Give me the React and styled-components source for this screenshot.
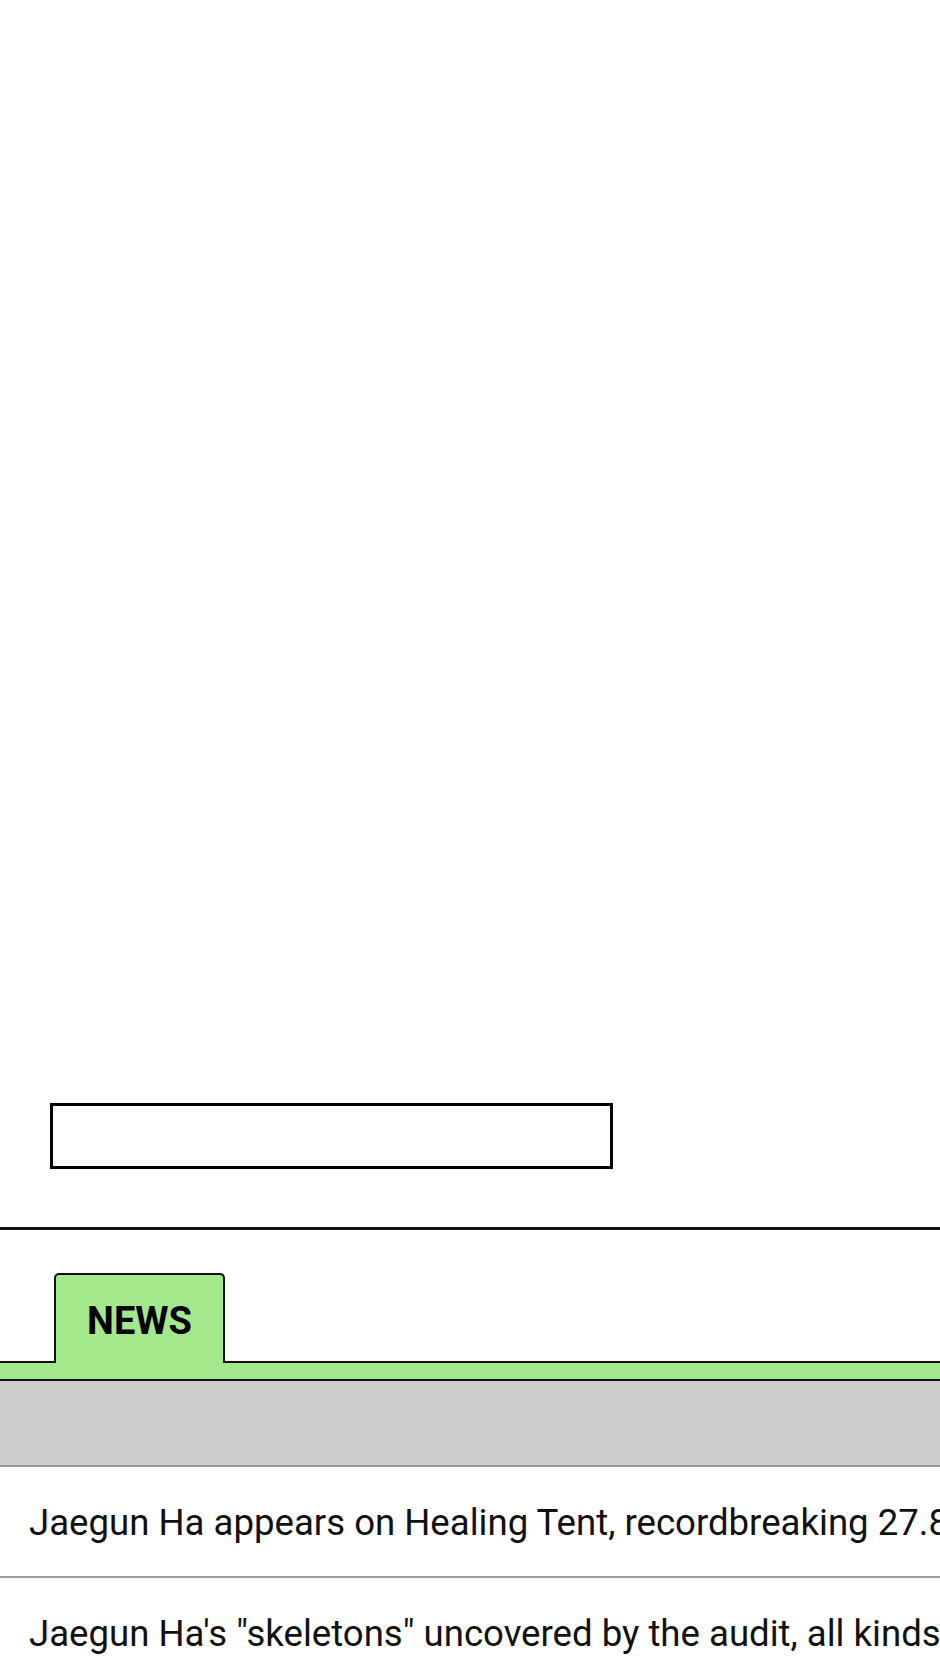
import React from "react";
import styled, { createGlobalStyle } from "styled-components";

const GlobalStyle = createGlobalStyle`
  html, body {
    margin: 0;
    padding: 0;
    background: #ffffff;
  }
  body {
    font-family: Roboto, "Liberation Sans", Arial, sans-serif;
    color: #111111;
    overflow-x: hidden;
  }
`;

const Page = styled.div`
  width: 100%;
  overflow: hidden;
`;

const Blank = styled.div`
  height: 1103px;
`;

const SearchBox = styled.input`
  display: block;
  box-sizing: border-box;
  margin: 0 0 0 50px;
  width: 563px;
  height: 66px;
  border: 3px solid #000000;
  border-radius: 0;
  background: #ffffff;
  font-family: inherit;
  font-size: 28px;
  padding: 0 12px;
  outline: none;
`;

const Rule = styled.hr`
  margin: 58px 0 0;
  border: none;
  height: 3px;
  background: #111111;
`;

const TabStrip = styled.div`
  display: flex;
  align-items: flex-end;
  margin-top: 43px;
  padding-left: 54px;
  border-bottom: 2px solid #111111;
`;

const Tab = styled.div`
  box-sizing: border-box;
  width: 171px;
  height: 90px;
  margin-bottom: -2px;
  display: flex;
  align-items: center;
  justify-content: center;
  padding-top: 4px;
  background: ${(p) => (p.active ? "#a3e98c" : "#ffffff")};
  border: 2px solid #111111;
  border-bottom: none;
  border-radius: 5px 5px 0 0;
  font-weight: 700;
  font-size: 38px;
  color: #000000;
`;

const GreenBar = styled.div`
  height: 16px;
  background: #a3e98c;
  border-bottom: 2px solid #111111;
`;

const ListHeader = styled.div`
  height: 84px;
  background: #cccccc;
  border-bottom: 2px solid #999999;
`;

const NewsRow = styled.div`
  padding: 34px 29px 32px;
  font-size: 36.6px;
  line-height: 43px;
  white-space: nowrap;
  overflow: hidden;
  border-bottom: 2px solid #a0a0a0;
  color: #111111;
`;

const news = [
  "Jaegun Ha appears on Healing Tent, recordbreaking 27.8% viewership ratings",
  'Jaegun Ha\'s "skeletons" uncovered by the audit, all kinds of rumors spread',
];

export default function App() {
  return (
    <Page>
      <GlobalStyle />
      <Blank />
      <SearchBox type="text" aria-label="search" />
      <Rule />
      <TabStrip>
        <Tab active>NEWS</Tab>
      </TabStrip>
      <GreenBar />
      <ListHeader />
      {news.map((item) => (
        <NewsRow key={item}>{item}</NewsRow>
      ))}
    </Page>
  );
}
